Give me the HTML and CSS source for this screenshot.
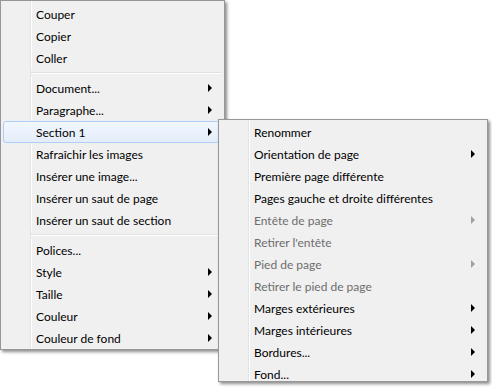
FILE: index.html
```html
<!DOCTYPE html>
<html lang="fr">
<head>
<meta charset="utf-8">
<link rel="stylesheet" href="styles.css">
</head>
<body>
<div class="stage">
  <div class="menu main">
    <div class="item">Couper</div>
    <div class="item">Copier</div>
    <div class="item">Coller</div>
    <div class="sep"></div>
    <div class="item sub">Document...</div>
    <div class="item sub">Paragraphe...</div>
    <div class="item sub active">Section 1</div>
    <div class="item">Rafraîchir les images</div>
    <div class="item">Insérer une image...</div>
    <div class="item">Insérer un saut de page</div>
    <div class="item">Insérer un saut de section</div>
    <div class="sep"></div>
    <div class="item">Polices...</div>
    <div class="item sub">Style</div>
    <div class="item sub">Taille</div>
    <div class="item sub">Couleur</div>
    <div class="item sub">Couleur de fond</div>
  </div>
  <div class="menu submenu">
    <div class="item">Renommer</div>
    <div class="item sub">Orientation de page</div>
    <div class="item">Première page différente</div>
    <div class="item">Pages gauche et droite différentes</div>
    <div class="item sub disabled">Entête de page</div>
    <div class="item disabled">Retirer l'entête</div>
    <div class="item sub disabled">Pied de page</div>
    <div class="item disabled">Retirer le pied de page</div>
    <div class="item sub">Marges extérieures</div>
    <div class="item sub">Marges intérieures</div>
    <div class="item sub">Bordures...</div>
    <div class="item sub">Fond...</div>
  </div>
</div>
</body>
</html>
```
FILE: styles.css
```css
html, body {
  margin: 0;
  padding: 0;
  background: #ffffff;
}
body {
  font-family: Lato, "Noto Sans", sans-serif;
  font-size: 12px;
  color: #000;
}
.stage {
  position: relative;
  width: 492px;
  height: 392px;
}
.menu {
  box-sizing: border-box;
  border: 1px solid #979797;
  background: linear-gradient(to right, #f0f0f0 0 29px, #e2e3e3 29px 30px, #ffffff 30px 31px, #f0f0f0 31px);
  box-shadow: 2px 2px 3px rgba(0, 0, 0, 0.45);
  display: flex;
  flex-direction: column;
}
.main {
  width: 225px;
  padding: 2px 0 0 0;
}
.submenu {
  position: absolute;
  left: 218px;
  top: 119px;
  width: 270px;
  height: 263px;
  padding: 1px 0 0 0;
  overflow: hidden;
}
.item {
  box-sizing: border-box;
  height: 22px;
  flex: 0 0 22px;
  margin: 0 4px 0 2px;
  padding: 0 7px 0 32px;
  display: flex;
  align-items: center;
  border: 1px solid transparent;
  border-radius: 3px;
  white-space: nowrap;
}
.item.sub::after {
  content: "";
  margin-left: auto;
  width: 0;
  height: 0;
  border-top: 4px solid transparent;
  border-bottom: 4px solid transparent;
  border-left: 4px solid #000;
}
.item.disabled {
  color: #6d6d6d;
}
.item.disabled.sub::after {
  border-left-color: #a0a0a0;
}
.item.active {
  border-color: #aecff7;
  background: linear-gradient(#f2f7fe, #e4edfa);
}
.sep {
  flex: 0 0 8px;
  height: 8px;
  margin: 0 2px 0 30px;
  background: linear-gradient(#f0f0f0 0 3px, #e0e0e0 3px 4px, #ffffff 4px 5px, #f0f0f0 5px);
}
```
